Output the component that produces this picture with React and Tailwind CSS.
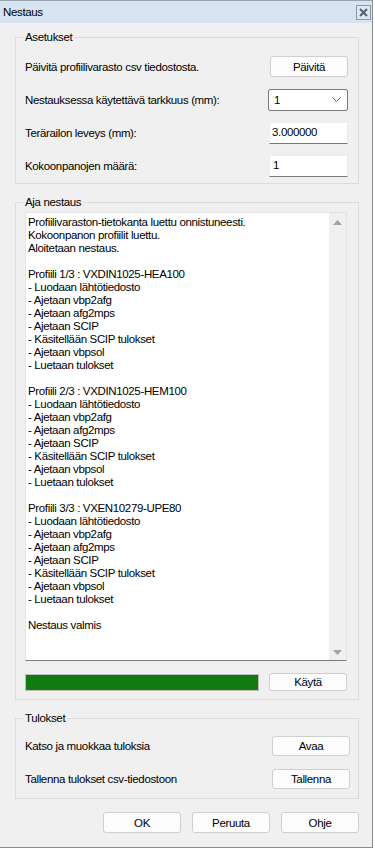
import React from "react";

const font = { fontFamily: '"Liberation Sans", Arial, sans-serif' };

const logLines = [
  "Profiilivaraston-tietokanta luettu onnistuneesti.",
  "Kokoonpanon profiilit luettu.",
  "Aloitetaan nestaus.",
  "",
  "Profiili 1/3 : VXDIN1025-HEA100",
  "- Luodaan lähtötiedosto",
  "- Ajetaan vbp2afg",
  "- Ajetaan afg2mps",
  "- Ajetaan SCIP",
  "- Käsitellään SCIP tulokset",
  "- Ajetaan vbpsol",
  "- Luetaan tulokset",
  "",
  "Profiili 2/3 : VXDIN1025-HEM100",
  "- Luodaan lähtötiedosto",
  "- Ajetaan vbp2afg",
  "- Ajetaan afg2mps",
  "- Ajetaan SCIP",
  "- Käsitellään SCIP tulokset",
  "- Ajetaan vbpsol",
  "- Luetaan tulokset",
  "",
  "Profiili 3/3 : VXEN10279-UPE80",
  "- Luodaan lähtötiedosto",
  "- Ajetaan vbp2afg",
  "- Ajetaan afg2mps",
  "- Ajetaan SCIP",
  "- Käsitellään SCIP tulokset",
  "- Ajetaan vbpsol",
  "- Luetaan tulokset",
  "",
  "Nestaus valmis",
];

function WinButton({ children, size = "h-[21px] w-[78px]" }) {
  return (
    <button
      className={`${size} rounded-[3px] border border-[#cfcfcf] bg-[#fdfdfd] text-[11.5px] leading-[14px] tracking-[-0.35px] text-black`}
    >
      {children}
    </button>
  );
}

function GroupBox({ title, className = "", children }) {
  return (
    <div className={`relative ml-[15px] w-[344px] border border-[#dcdcdc] ${className}`}>
      {/* legend sits on the top border */}
      <span className="absolute left-[7px] top-[-8px] bg-[#f0f0f0] px-[2px] text-[11.5px] leading-[14px] tracking-[-0.35px]">
        {title}
      </span>
      {children}
    </div>
  );
}

function Row({ label, children, box = "h-[33px] pr-[10px]" }) {
  return (
    <div className={`flex items-center justify-between pl-[9px] ${box}`}>
      <span className="text-[11.5px] leading-[14px] tracking-[-0.35px]">{label}</span>
      {children}
    </div>
  );
}

export default function App() {
  return (
    <div className="h-[849px] w-[375px] bg-white" style={font}>
      <div className="flex h-[848px] w-[373px] flex-col border-b border-r border-[#8c8c8c] bg-[#f0f0f0] text-black">
        {/* Title bar */}
        <div className="flex h-[23px] shrink-0 items-center justify-between border-t border-[#9aa4ae] bg-[#d6e3f0] pl-[3px] pr-[1px]">
          <span className="text-[11.5px] leading-[14px] tracking-[-0.35px]">Nestaus</span>
          <div className="flex h-[15px] w-[15px] items-center justify-center border border-[#8a96a3] bg-[#dfe8f2]">
            <svg width="9" height="9" viewBox="0 0 9 9">
              <path d="M1 1 L8 8 M8 1 L1 8" stroke="#55616e" strokeWidth="2" />
            </svg>
          </div>
        </div>

        {/* Asetukset */}
        <GroupBox title="Asetukset" className="mt-[14px] h-[147px] pt-[12px]">
          <Row label="Päivitä profiilivarasto csv tiedostosta.">
            <WinButton>Päivitä</WinButton>
          </Row>
          <Row label="Nestauksessa käytettävä tarkkuus (mm):">
            <div className="flex h-[22px] w-[80px] items-center justify-between rounded-[2px] border border-[#7a7a7a] bg-white pl-[5px] pr-[6px]">
              <span className="text-[11.5px] leading-[14px]">1</span>
              <svg width="9" height="6" viewBox="0 0 9 6">
                <path d="M0.5 0.5 L4.5 4.5 L8.5 0.5" fill="none" stroke="#666" strokeWidth="1" />
              </svg>
            </div>
          </Row>
          <Row label="Terärailon leveys (mm):">
            <div className="flex h-[22px] w-[79px] items-start border border-[#ececec] border-b-[#7a7a7a] bg-white pl-[2px] pt-[2px] text-[11.5px] leading-[14px] tracking-[-0.35px]">
              3.000000
            </div>
          </Row>
          <Row label="Kokoonpanojen määrä:">
            <div className="flex h-[22px] w-[79px] items-start border border-[#ececec] border-b-[#7a7a7a] bg-white pl-[3px] pt-[2px] text-[11.5px] leading-[14px]">
              1
            </div>
          </Row>
        </GroupBox>

        {/* Aja nestaus */}
        <GroupBox title="Aja nestaus" className="mt-[18px] h-[498px] pt-[9px]">
          <div className="ml-[9px] flex h-[449px] w-[322px] border border-[#e3e3e3] border-b-[#7a7a7a] bg-white">
            <div className="flex-1 whitespace-pre pl-[2px] pt-[3px] text-[11.5px] leading-[13px] tracking-[-0.35px]">
              {logLines.map((l, i) => (
                <div key={i} className="h-[13px]">
                  {l}
                </div>
              ))}
            </div>
            <div className="flex w-[17px] flex-col items-center justify-between bg-[#f0f0f0] pb-[5px] pt-[7px]">
              <svg width="9" height="5" viewBox="0 0 9 5">
                <path d="M0 5 L4.5 0 L9 5 Z" fill="#a3a3a3" />
              </svg>
              <svg width="9" height="5" viewBox="0 0 9 5">
                <path d="M0 0 L4.5 5 L9 0 Z" fill="#a3a3a3" />
              </svg>
            </div>
          </div>
          <div className="mt-[12px] flex items-center justify-between pl-[9px] pr-[11px]">
            <div className="h-[17px] w-[234px] border border-[#bcbcbc] bg-[#e6e6e6]">
              <div className="h-full w-full bg-[#107c10]" />
            </div>
            <WinButton size="h-[18px] w-[78px]">Käytä</WinButton>
          </div>
        </GroupBox>

        {/* Tulokset */}
        <GroupBox title="Tulokset" className="mt-[18px] h-[81px] pt-[17px]">
          <Row label="Katso ja muokkaa tuloksia" box="h-[20px] pr-[8px]">
            <WinButton size="h-[20px] w-[78px]">Avaa</WinButton>
          </Row>
          <div className="h-[13px]" />
          <Row label="Tallenna tulokset csv-tiedostoon" box="h-[20px] pr-[8px]">
            <WinButton size="h-[20px] w-[78px]">Tallenna</WinButton>
          </Row>
        </GroupBox>

        {/* Dialog buttons */}
        <div className="mt-[13px] flex gap-[11px] pl-[103px]">
          <WinButton>OK</WinButton>
          <WinButton>Peruuta</WinButton>
          <WinButton>Ohje</WinButton>
        </div>
      </div>
    </div>
  );
}
